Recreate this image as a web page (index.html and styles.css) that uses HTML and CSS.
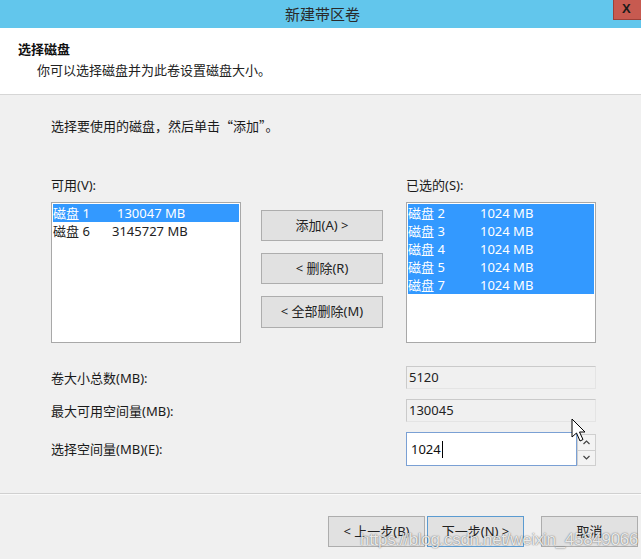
FILE: index.html
```html
<!DOCTYPE html>
<html lang="zh-CN">
<head>
<meta charset="utf-8">
<title>新建带区卷</title>
<link rel="stylesheet" href="styles.css">
</head>
<body>
<div class="dialog">
  <div class="titlebar">
    <span></span>
    <span class="title">新建带区卷</span>
    <span class="close">X</span>
  </div>
  <div class="header">
    <div class="h-title">选择磁盘</div>
    <div class="h-sub">你可以选择磁盘并为此卷设置磁盘大小。</div>
  </div>
  <div class="content">
    <div class="instr">选择要使用的磁盘，然后单击“添加”。</div>
    <div class="pick">
      <div class="lbl lbl-left">可用(V):</div>
      <div class="lbl lbl-right">已选的(S):</div>
      <div class="listbox">
        <div class="row sel"><span class="c1">磁盘 1</span><span class="c2 w1">130047 MB</span></div>
        <div class="row"><span class="c1">磁盘 6</span><span class="c2 w2">3145727 MB</span></div>
      </div>
      <div class="mid">
        <div class="btn">添加(A) &gt;</div>
        <div class="btn">&lt; 删除(R)</div>
        <div class="btn">&lt; 全部删除(M)</div>
      </div>
      <div class="listbox">
        <div class="row sel"><span class="c1">磁盘 2</span><span class="c2 w3">1024 MB</span></div>
        <div class="row sel"><span class="c1">磁盘 3</span><span class="c2 w3">1024 MB</span></div>
        <div class="row sel"><span class="c1">磁盘 4</span><span class="c2 w3">1024 MB</span></div>
        <div class="row sel"><span class="c1">磁盘 5</span><span class="c2 w3">1024 MB</span></div>
        <div class="row sel"><span class="c1">磁盘 7</span><span class="c2 w3">1024 MB</span></div>
      </div>
    </div>
    <div class="fields">
      <div class="flabel">卷大小总数(MB):</div>
      <div class="ro">5120</div>
      <div class="flabel">最大可用空间量(MB):</div>
      <div class="ro">130045</div>
      <div class="flabel">选择空间量(MB)(E):</div>
      <div class="spin">
        <div class="spin-input">1024<span class="caret"></span></div>
        <div class="spin-btns">
          <div class="sb"><svg width="7" height="5" viewBox="0 0 7 5"><path d="M0.5 4 L3.5 1 L6.5 4" fill="none" stroke="#444" stroke-width="1.2"/></svg></div>
          <div class="sb"><svg width="7" height="5" viewBox="0 0 7 5"><path d="M0.5 1 L3.5 4 L6.5 1" fill="none" stroke="#444" stroke-width="1.2"/></svg></div>
        </div>
      </div>
    </div>
  </div>
  <div class="sep"></div>
  <div class="footer">
    <div class="fbtn">&lt; 上一步(B)</div>
    <div class="fbtn def">下一步(N) &gt;</div>
    <div class="fbtn cancel">取消</div>
  </div>
  <svg class="cursor" width="16" height="26" viewBox="0 0 16 26"><path d="M1 1 L1 19 L5.5 15 L9 23 L12 21.5 L8.5 14 L14 14 Z" fill="#fff" stroke="#000" stroke-width="1"/></svg>
  <div class="watermark">https://blog.csdn.net/weixin_45849066</div>
</div>
</body>
</html>
```

FILE: styles.css
```css
* { box-sizing: border-box; }
html, body { margin: 0; padding: 0; background: #f0f0f0; }
body {
  font-family: "Noto Sans", "Noto Sans CJK SC", sans-serif;
  font-size: 13px;
  color: #1a1a1a;
}
.dialog {
  position: relative;
  width: 641px;
  height: 559px;
  overflow: hidden;
  background: #f0f0f0;
}
.titlebar {
  height: 28px;
  background: #62c6ec;
  display: grid;
  grid-template-columns: 1fr auto 1fr;
  align-items: start;
}
.title {
  font-family: "Noto Sans CJK SC", sans-serif;
  font-size: 15px;
  line-height: 27px;
  color: #2a2a2a;
  padding-left: 4px;
}
.close {
  justify-self: end;
  width: 28px;
  height: 20px;
  background: #c75a50;
  border-left: 1px solid #9c4038;
  border-bottom: 1px solid #9c4038;
  color: #1a1a1a;
  font-family: "Liberation Sans", sans-serif;
  font-weight: bold;
  font-size: 13px;
  line-height: 18px;
  padding-left: 8px;
}
.header {
  height: 67px;
  background: #fff;
  border-bottom: 1px solid #d6d6d6;
  padding: 12px 0 0 18px;
}
.h-title {
  font-family: "Noto Sans CJK SC", sans-serif;
  font-weight: bold;
  font-size: 13px;
  line-height: 18px;
  color: #111;
}
.h-sub {
  font-family: "Noto Sans CJK SC", sans-serif;
  font-size: 13px;
  line-height: 18px;
  margin-top: 3px;
  padding-left: 19px;
  color: #222;
}
.content {
  padding-left: 51px;
}
.instr {
  font-family: "Noto Sans CJK SC", sans-serif;
  margin-top: 22px;
  line-height: 18px;
}
.pick {
  margin-top: 41px;
  display: grid;
  grid-template-columns: 190px 122px 190px;
  column-gap: 20px;
  grid-template-rows: 18px 141px;
  row-gap: 8px;
}
.pick > .lbl { line-height: 18px; }
.lbl-left { grid-column: 1; grid-row: 1; }
.lbl-right { grid-column: 3; grid-row: 1; margin-left: 3px; }
.pick .listbox:nth-of-type(1) { grid-column: 1; }
.listbox {
  grid-row: 2;
  background: #fff;
  border: 1px solid #a8a8a8;
  padding: 1px;
}
.pick > .listbox:last-child { grid-column: 3; margin-left: 3px; margin-right: -3px; }
.row {
  height: 18px;
  line-height: 18px;
  display: flex;
  white-space: nowrap;
  color: #222;
}
.row.sel { background: #3399ff; color: #fff; }
.c1 { display: inline-block; width: 0; min-width: 0; }
.c2.w1 { margin-left: 64px; }
.c2.w2 { margin-left: 59px; }
.c2.w3 { margin-left: 72px; }
.mid {
  grid-column: 2;
  grid-row: 2;
  padding-top: 8px;
  display: flex;
  flex-direction: column;
  gap: 12px;
}
.btn {
  height: 31px;
  background: #e1e1e1;
  border: 1px solid #adadad;
  text-align: center;
  line-height: 29px;
  color: #222;
}
.btn + .btn + .btn { height: 32px; }
.fields {
  margin-top: 23px;
  display: grid;
  grid-template-columns: 355px 190px;
  grid-template-rows: 23px 23px 34px;
  row-gap: 10px;
  align-items: center;
}
.flabel { line-height: 18px; }
.ro {
  height: 23px;
  border: 1px solid #cacaca;
  border-right-color: #e4e4e4;
  border-bottom-color: #e4e4e4;
  background: #f0f0f0;
  line-height: 21px;
  padding-left: 2px;
  color: #222;
}
.spin {
  display: flex;
  height: 34px;
  align-self: stretch;
}
.spin-input {
  flex: 1;
  background: #fff;
  border: 1px solid #7aa0d4;
  line-height: 30px;
  padding-left: 4px;
  color: #111;
  display: flex;
  align-items: center;
}
.caret {
  display: inline-block;
  width: 1px;
  height: 17px;
  background: #000;
  margin-left: 1px;
}
.spin-btns {
  width: 19px;
  display: flex;
  flex-direction: column;
  padding: 2px 0 0 0;
  background: #f0f0f0;
}
.sb {
  flex: 1;
  border: 1px solid #cfcfcf;
  background: #f3f3f3;
  display: flex;
  align-items: center;
  justify-content: center;
}
.sb + .sb { border-top: none; }
.sep {
  margin-top: 27px;
  height: 2px;
  border-top: 1px solid #d0d0d0;
  border-bottom: 1px solid #fafafa;
}
.footer {
  margin-top: 21px;
  display: flex;
  justify-content: flex-end;
  padding-right: 3px;
}
.fbtn {
  width: 97px;
  height: 31px;
  background: #e1e1e1;
  border: 1px solid #adadad;
  text-align: center;
  line-height: 29px;
  color: #222;
  margin-left: 2px;
}
.fbtn.def { border-color: #5b9bd1; }
.fbtn.cancel { margin-left: 17px; }
.cursor {
  position: absolute;
  left: 571px;
  top: 418px;
}
.watermark {
  position: absolute;
  left: 360px;
  top: 530px;
  font-family: "Liberation Sans", sans-serif;
  font-size: 17px;
  letter-spacing: -0.3px;
  color: rgba(255, 255, 255, 0.85);
  text-shadow: 0 0 1px rgba(0, 0, 0, 0.5), 0 0 2px rgba(0, 0, 0, 0.25);
  white-space: nowrap;
}
```
